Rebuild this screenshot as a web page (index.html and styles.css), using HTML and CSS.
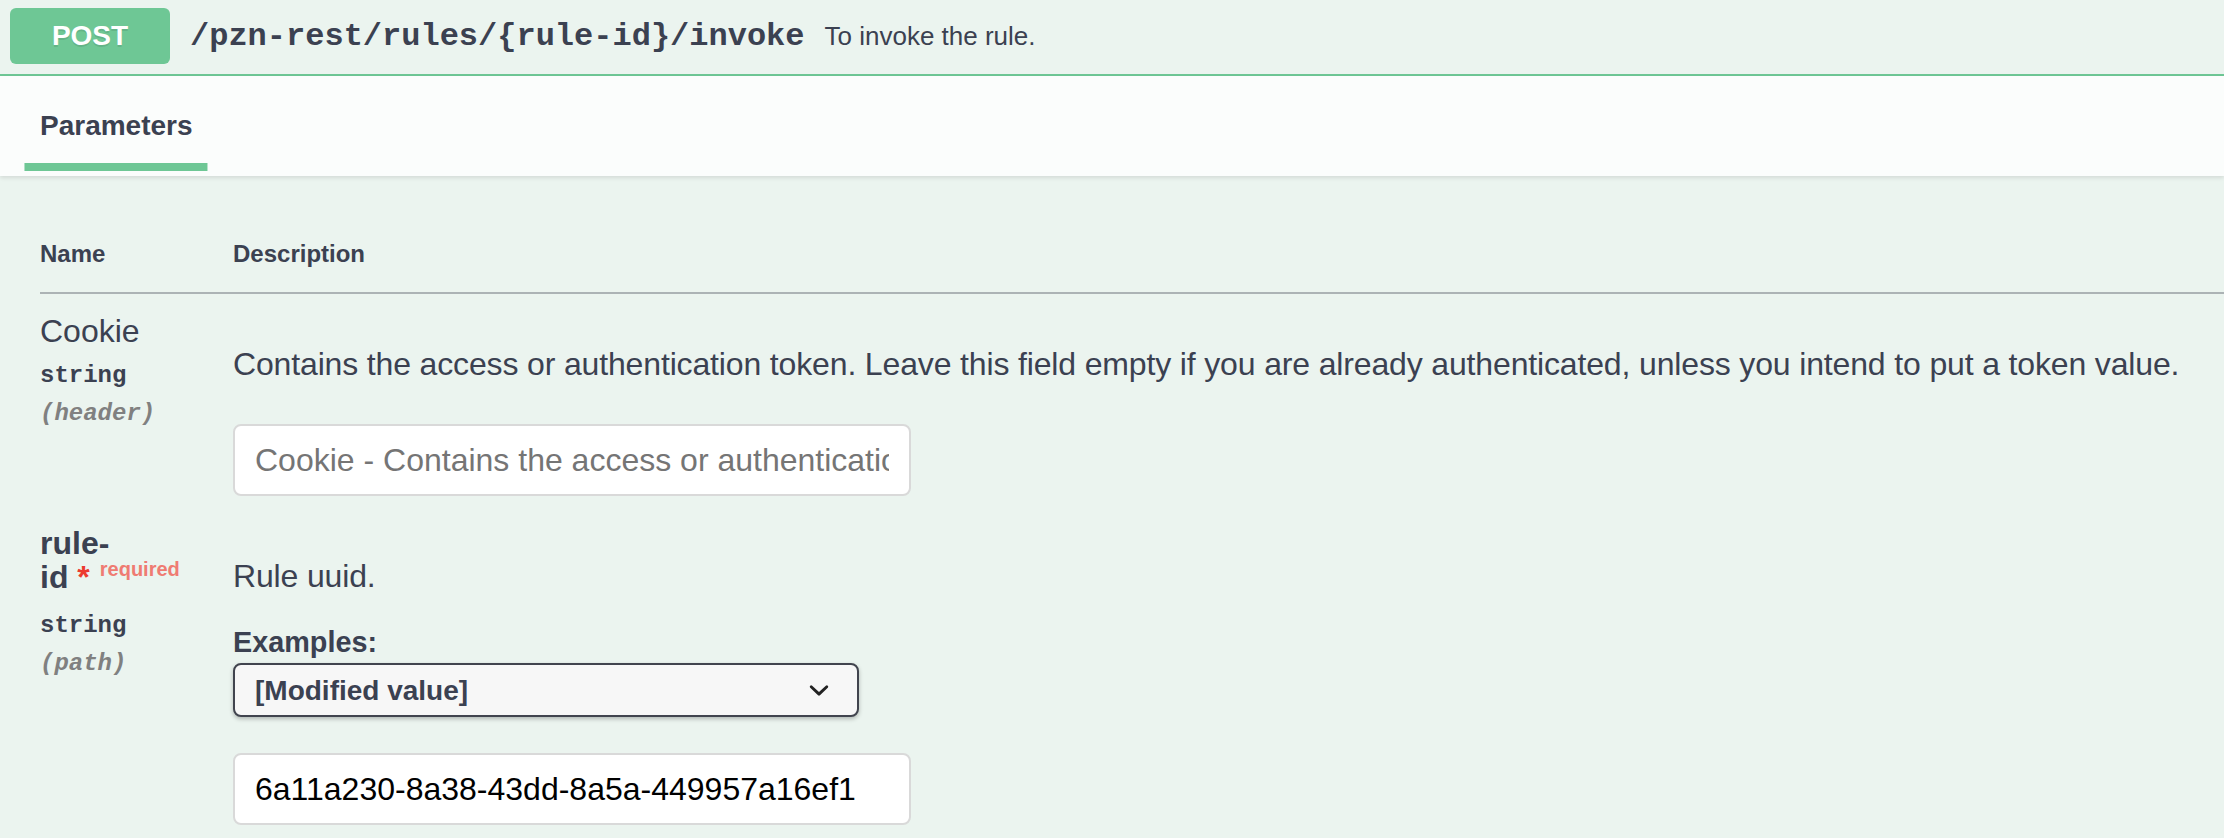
FILE: index.html
```html
<!DOCTYPE html>
<html lang="en">
<head>
<meta charset="utf-8">
<title>POST /pzn-rest/rules/{rule-id}/invoke</title>
<link rel="stylesheet" href="styles.css">
</head>
<body>
<div class="opblock">
  <div class="summary">
    <span class="method">POST</span>
    <span class="path">/pzn-rest/rules/{rule-id}/invoke</span>
    <span class="summary-desc">To invoke the rule.</span>
  </div>
  <div class="section-header">
    <h4 class="tab-title"><span class="tab-label">Parameters</span></h4>
  </div>
  <div class="table-container">
    <table class="params">
      <thead>
        <tr>
          <th class="col-name">Name</th>
          <th class="col-desc">Description</th>
        </tr>
      </thead>
      <tbody>
        <tr>
          <td class="col-name">
            <div class="param-name">Cookie</div>
            <div class="param-type">string</div>
            <div class="param-in">(header)</div>
          </td>
          <td class="col-desc">
            <div class="desc-body">
              <p class="desc-text">Contains the access or authentication token. Leave this field empty if you are already authenticated, unless you intend to put a token value.</p>
              <input class="text-input" type="text" placeholder="Cookie - Contains the access or authentication token. Leave this field empty if you are already authenticated, unless you intend to put a token value.">
            </div>
          </td>
        </tr>
        <tr>
          <td class="col-name">
            <div class="param-name required">rule-<wbr>id<span class="req-star">&nbsp;*</span><span class="req-label">required</span></div>
            <div class="param-type">string</div>
            <div class="param-in">(path)</div>
          </td>
          <td class="col-desc">
            <div class="desc-body">
              <p class="desc-text">Rule uuid.</p>
              <div class="examples">
                <span class="examples-label">Examples:</span>
                <div class="select-wrap">
                  <select class="select">
                    <option>[Modified value]</option>
                  </select>
                  <svg class="chevron" viewBox="0 0 20 20" xmlns="http://www.w3.org/2000/svg"><path d="M13.418 7.859a.695.695 0 01.978 0 .68.68 0 010 .969l-3.908 3.83a.697.697 0 01-.979 0l-3.908-3.83a.68.68 0 010-.969.695.695 0 01.978 0L10 11l3.418-3.141z"/></svg>
                </div>
              </div>
              <input class="text-input value" type="text" value="6a11a230-8a38-43dd-8a5a-449957a16ef1">
            </div>
          </td>
        </tr>
      </tbody>
    </table>
  </div>
</div>
</body>
</html>
```
FILE: styles.css
```css
* { box-sizing: border-box; }
html, body { margin: 0; padding: 0; }
body {
  width: 2224px;
  height: 838px;
  overflow: hidden;
  background: #ebf4ef;
  font-family: "Liberation Sans", Arial, Helvetica, sans-serif;
  color: #3b4151;
}
.summary {
  display: flex;
  align-items: center;
  padding: 8px 10px 10px;
  border-bottom: 2px solid #6ec795;
}
.method {
  display: flex;
  align-items: center;
  justify-content: center;
  width: 160px;
  height: 56px;
  border-radius: 6px;
  background: #6ec795;
  color: #fff;
  font-size: 28px;
  font-weight: 700;
  text-shadow: 0 2px 0 rgba(0, 0, 0, 0.1);
}
.path {
  padding: 0 20px;
  font-family: "Liberation Mono", "Courier New", monospace;
  font-size: 32px;
  font-weight: 700;
  color: #3b4151;
}
.summary-desc {
  font-size: 26px;
  color: #3b4151;
}
.section-header {
  display: flex;
  align-items: center;
  min-height: 100px;
  padding: 16px 40px;
  background: rgba(255, 255, 255, 0.8);
  box-shadow: 0 2px 4px rgba(0, 0, 0, 0.1);
}
.tab-title {
  margin: 0;
  font-size: 28px;
  font-weight: 700;
  color: #3b4151;
}
.tab-label { position: relative; }
.tab-label::after {
  content: "";
  position: absolute;
  left: 50%;
  bottom: -30px;
  width: 120%;
  height: 8px;
  transform: translateX(-50%);
  background: #6ec795;
}
.table-container { padding: 40px 0 0 40px; }
.params {
  width: 2184px;
  border-collapse: collapse;
  table-layout: fixed;
}
.params th {
  padding: 24px 0;
  border-bottom: 2px solid rgba(59, 65, 81, 0.2);
  text-align: left;
  font-size: 24px;
  font-weight: 700;
  color: #3b4151;
}
.params th.col-name { width: 193px; }
.params td {
  padding: 20px 0 0;
  vertical-align: top;
}
.params td.col-name { padding: 20px 0; }
.param-name {
  font-size: 32px;
  line-height: 34px;
}
.param-name.required { font-weight: 700; }
.req-star { color: #ec3a2f; }
.req-label {
  position: relative;
  top: -12px;
  padding: 0 10px;
  font-size: 20px;
  color: #ef7b72;
}
.param-type {
  padding: 14px 0 10px;
  font-family: "Liberation Mono", "Courier New", monospace;
  font-size: 24px;
  line-height: 28px;
  font-weight: 700;
}
.param-in {
  font-family: "Liberation Mono", "Courier New", monospace;
  font-size: 24px;
  line-height: 28px;
  font-weight: 700;
  font-style: italic;
  color: #808080;
}
.desc-body {
  display: flex;
  flex-direction: column;
  align-items: flex-start;
}
.desc-text {
  margin: 32px 0;
  font-size: 32px;
  line-height: 36px;
  letter-spacing: -0.15px;
  white-space: nowrap;
}
.text-input {
  display: block;
  width: 678px;
  height: 72px;
  margin: 10px 0;
  padding: 0 20px;
  border: 2px solid #d9d9d9;
  border-radius: 8px;
  background: #fff;
  font-family: "Liberation Sans", Arial, sans-serif;
  font-size: 32px;
  color: #000;
  outline: none;
}
.text-input::placeholder { color: #757575; }
.examples { margin-bottom: 26px; }
.examples-label {
  display: block;
  font-size: 28.8px;
  line-height: 33px;
  font-weight: 700;
}
.select-wrap {
  position: relative;
  width: 626px;
  margin-top: 4px;
}
.select {
  -webkit-appearance: none;
  appearance: none;
  display: block;
  width: 626px;
  height: 54px;
  padding: 0 80px 0 20px;
  border: 2px solid #41444e;
  border-radius: 8px;
  background: #f7f7f7;
  box-shadow: 0 2px 4px 0 rgba(0, 0, 0, 0.25);
  font-family: "Liberation Sans", Arial, sans-serif;
  font-size: 28px;
  font-weight: 700;
  color: #3b4151;
  outline: none;
}
.chevron {
  position: absolute;
  top: 7px;
  right: 20px;
  width: 40px;
  height: 40px;
  fill: #222;
  pointer-events: none;
}
```
